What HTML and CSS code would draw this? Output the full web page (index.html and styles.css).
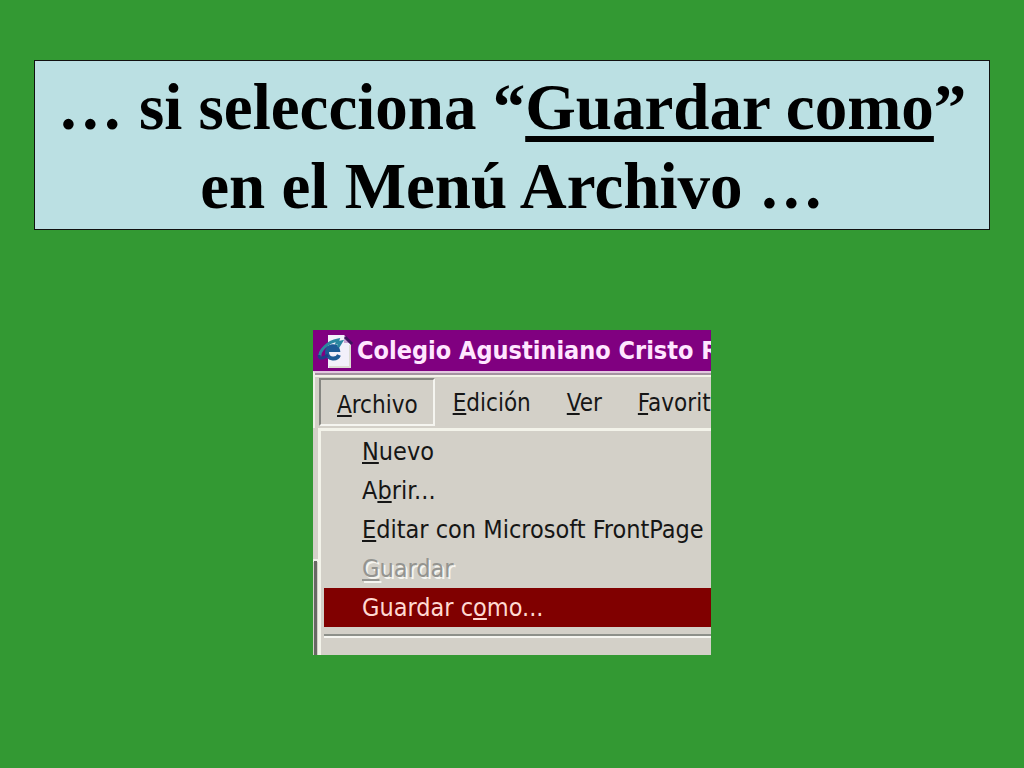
FILE: index.html
```html
<!DOCTYPE html>
<html lang="es">
<head>
<meta charset="utf-8">
<title>Guardar como</title>
<link rel="stylesheet" href="styles.css">
</head>
<body>
<main class="slide">
  <h1 class="heading">… si selecciona “<span class="term">Guardar como</span>”<br>en el Menú Archivo …</h1>
  <section class="window" aria-label="Menú Archivo">
    <header class="titlebar">
      <svg class="page-icon" viewBox="0 0 38 36" aria-hidden="true">
        <path d="M11 2H27L34 10V35H11Z" fill="#f2f0fa"/>
        <path d="M27 2V10H34Z" fill="#c9a3d3"/>
        <path d="M28 4L35 11" stroke="#3d145e" stroke-width="3"/>
        <path d="M33 12V34H12" fill="none" stroke="#dcdcd4" stroke-width="2"/>
        <path d="M22 22C20 27 11 27 10 20C10 12 20 11 21 17H11" fill="none" stroke="#1d5b96" stroke-width="4"/>
        <path d="M3 24C2 18 10 9 21 7L20 10L24 9L21 14" fill="none" stroke="#2a87a0" stroke-width="3"/>
        <path d="M2 22C2 27 7 25 11 22" fill="none" stroke="#203d88" stroke-width="3"/>
      </svg>
      <span class="caption">Colegio Agustiniano Cristo R</span>
    </header>
    <nav class="menubar">
      <button class="menu open" type="button"><u>A</u>rchivo</button>
      <button class="menu" type="button"><u>E</u>dición</button>
      <button class="menu" type="button"><u>V</u>er</button>
      <button class="menu" type="button"><u>F</u>avorit</button>
    </nav>
    <div class="content">
      <div class="dropdown">
        <button class="item" type="button"><u>N</u>uevo</button>
        <button class="item" type="button">A<u>b</u>rir...</button>
        <button class="item" type="button"><u>E</u>ditar con Microsoft FrontPage</button>
        <button class="item" type="button" disabled><u>G</u>uardar</button>
        <button class="item selected" type="button">Guardar c<u>o</u>mo...</button>
        <hr class="separator">
      </div>
    </div>
  </section>
</main>
</body>
</html>
```
FILE: styles.css
```css
* { box-sizing: border-box; }

body {
  margin: 0;
  background: #339933;
}

.slide {
  min-height: 100vh;
  padding: 60px 34px;
  display: flex;
  flex-direction: column;
  align-items: center;
  gap: 100px;
}

.heading {
  width: 100%;
  margin: 0;
  padding: 7px 0 3px;
  border: 1px solid #111;
  background: #bbe0e3;
  color: #000;
  font: bold 65px/79px "Liberation Serif", serif;
  text-align: center;
}

.term {
  text-decoration: underline;
  text-decoration-thickness: 6px;
  text-decoration-skip-ink: none;
  text-underline-offset: 7px;
}

.window {
  width: 398px;
  max-width: 100%;
  overflow: hidden;
  background: #d3d0c8;
  color: #161616;
  font: 25px/39px "DejaVu Sans Condensed", "DejaVu Sans", sans-serif;
  white-space: nowrap;
}

.titlebar {
  display: flex;
  align-items: center;
  gap: 2px;
  height: 41px;
  padding-left: 4px;
  background: #800080;
  color: #ffe6ff;
  font-weight: bold;
}

.page-icon {
  flex: none;
  width: 38px;
  height: 36px;
}

.menubar {
  display: flex;
  height: 57px;
  padding: 5px 0 2px 4px;
  border-top: 2px solid #e3c7e0;
  border-left: 2px solid #efeee8;
  box-shadow: inset 0 2px #a493a0, inset 0 4px #f3f3e8;
  font-size: 24px;
}

.menu,
.item {
  border: 0;
  background: none;
  color: inherit;
  font: inherit;
  text-align: left;
}

.menu {
  padding: 6px 18px;
  line-height: 39px;
}

.open {
  padding: 6px 15px 4px 16px;
  border: 2px solid;
  border-color: #858580 #f5f5f0 #f5f5f0 #858580;
}

u {
  text-decoration-thickness: 2px;
  text-decoration-skip-ink: none;
  text-underline-offset: 2px;
}

.content {
  padding-left: 5px;
  background:
    linear-gradient(#686864, #686864) 1px 100% / 3px 94px no-repeat,
    linear-gradient(#f0f0ea, #f0f0ea) 0 131px / 5px 3px no-repeat;
}

.dropdown {
  display: flex;
  flex-direction: column;
  padding: 1px 0 17px 3px;
  border-top: 3px solid #f3f3ea;
  border-left: 3px solid #f3f3ea;
}

.item {
  height: 39px;
  padding: 0 0 0 38px;
}

.item:disabled {
  color: #949490;
  text-shadow: 2px 2px #f5f5f0;
}

.selected {
  background: #800000;
  color: #ffd9d2;
}

.separator {
  width: 100%;
  margin: 7px 0 0;
  border: solid;
  border-width: 2px 0;
  border-color: #8d908a #f5f5f0 #f5f5f0;
}
```
